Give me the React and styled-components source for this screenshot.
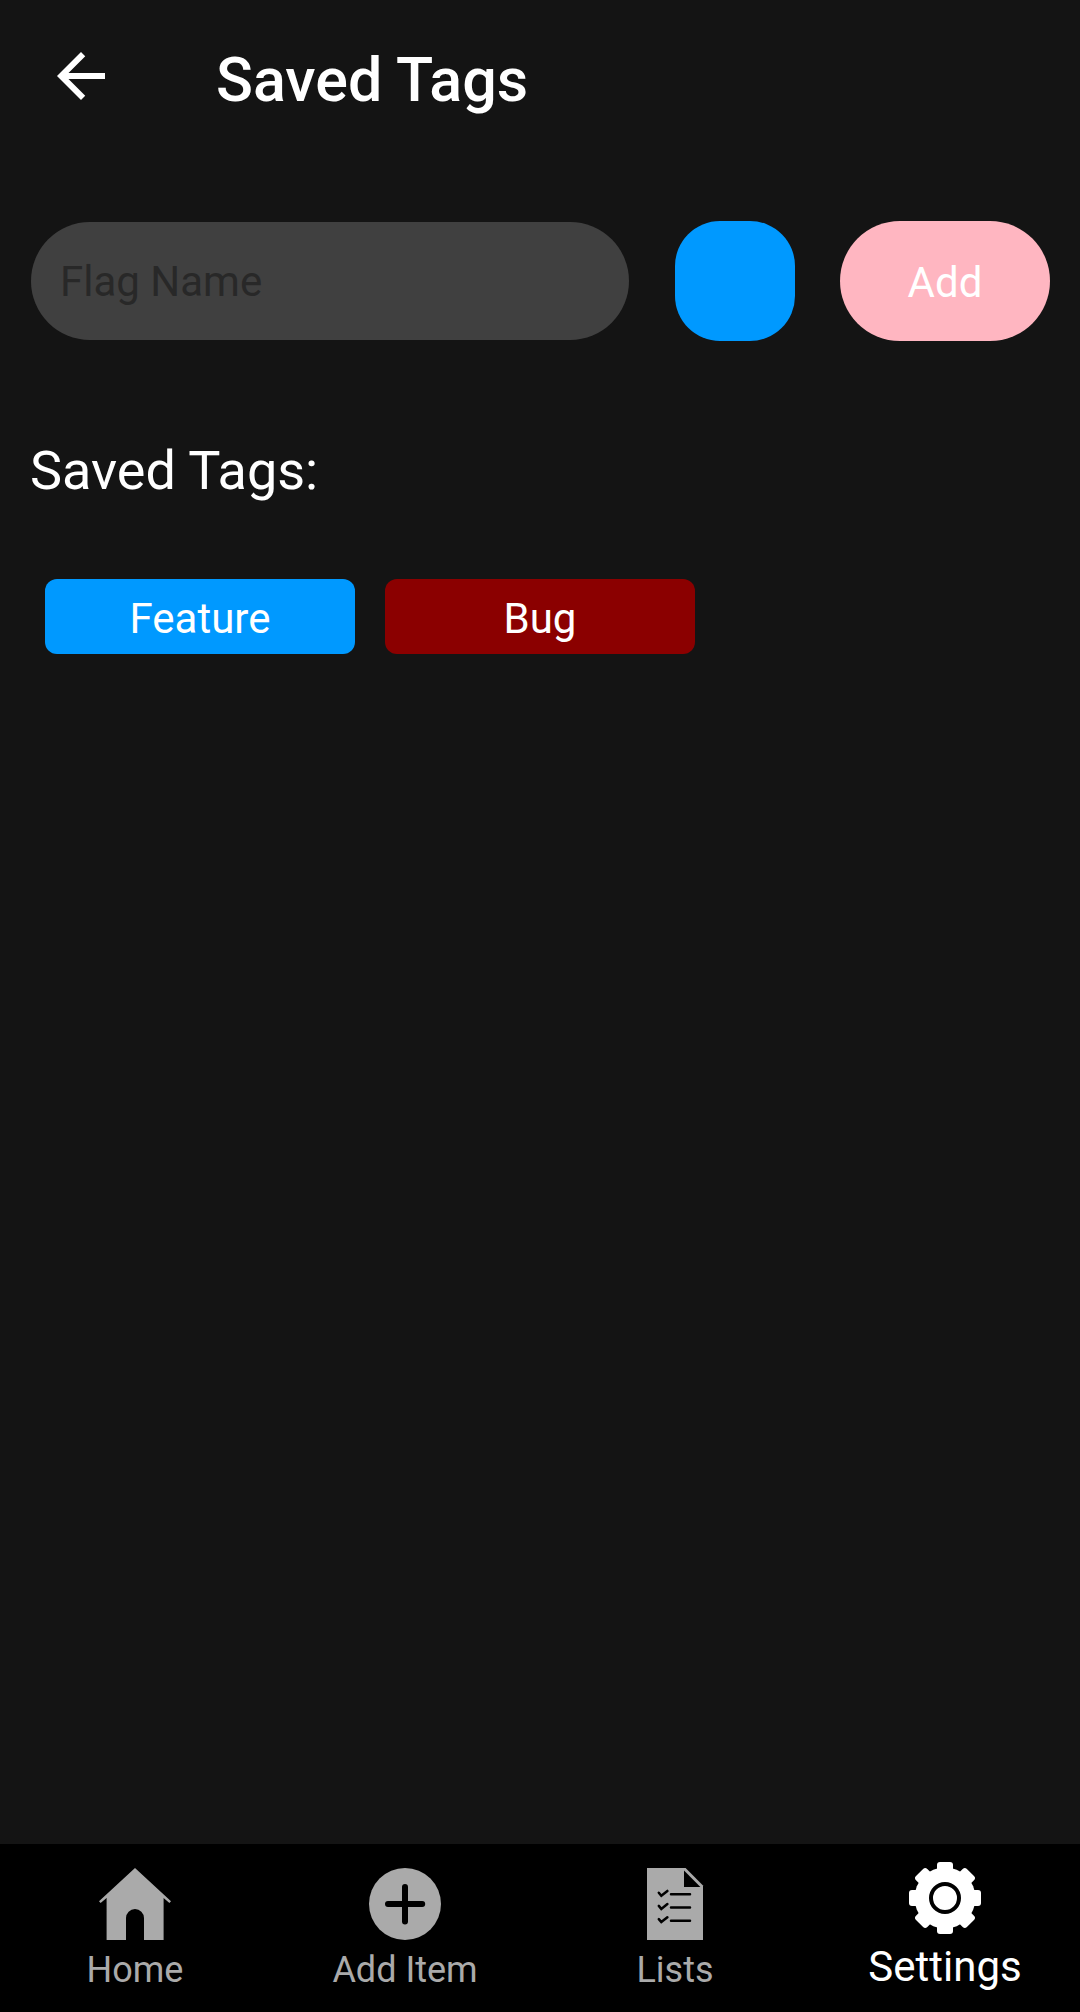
import React, { useState } from "react";
import styled, { createGlobalStyle } from "styled-components";

const GlobalStyle = createGlobalStyle`
  *, *::before, *::after { box-sizing: border-box; }
  body {
    margin: 0;
    background: #141414;
    color: #ffffff;
    font-family: Roboto, "Liberation Sans", sans-serif;
  }
  button, input { font: inherit; color: inherit; border: 0; }
`;

const Screen = styled.div`
  display: flex;
  flex-direction: column;
  min-height: 100vh;
`;

const Header = styled.header`
  display: flex;
  align-items: flex-start;
  gap: 99px;
  padding: 40px 45px 0;
`;

const BackButton = styled.button`
  display: flex;
  padding: 0;
  background: none;
  cursor: pointer;
`;

const Icon = styled.svg`
  display: block;
  width: 72px;
  height: 72px;
`;

const Title = styled.h1`
  margin: 0;
  font-size: 61px;
  font-weight: 500;
  line-height: 80px;
`;

const Main = styled.main`
  flex: 1;
  padding: 101px 30px 30px;
`;

const TagForm = styled.form`
  display: flex;
  align-items: center;
  gap: 45px;
`;

const NameInput = styled.input`
  flex: 1;
  min-width: 0;
  height: 118px;
  margin: 0 1px;
  padding: 0 29px;
  border-radius: 59px;
  background: #404040;
  font-size: 42px;
  outline: none;
  &::placeholder { color: #282828; opacity: 1; }
`;

const ColorButton = styled.button`
  width: 120px;
  height: 120px;
  border-radius: 45px;
  background: ${(p) => p.$color};
  cursor: pointer;
`;

const AddButton = styled.button`
  width: 210px;
  height: 120px;
  padding: 2px 0 0;
  border-radius: 60px;
  background: #ffb6c1;
  font-size: 42px;
  cursor: pointer;
`;

const SectionTitle = styled.h2`
  margin: 98px 0 76px;
  font-size: 54px;
  font-weight: 400;
  line-height: 64px;
`;

const TagList = styled.ul`
  display: flex;
  flex-wrap: wrap;
  gap: 30px;
  margin: 0;
  padding: 0 15px;
  list-style: none;
`;

const Tag = styled.li`
  display: flex;
  align-items: center;
  justify-content: center;
  width: 310px;
  height: 75px;
  padding-top: 4px;
  border-radius: 12px;
  background: ${(p) => p.$color};
  font-size: 42px;
`;

const TabBar = styled.nav`
  position: sticky;
  bottom: 0;
  display: grid;
  grid-template-columns: repeat(4, 1fr);
  align-items: end;
  height: 168px;
  padding-bottom: 20px;
  background: #000000;
`;

const Tab = styled.a`
  display: flex;
  flex-direction: column;
  align-items: center;
  gap: 8px;
  color: ${(p) => (p.$active ? "#ffffff" : "#aaaaaa")};
  font-size: ${(p) => (p.$active ? "42px" : "36px")};
  line-height: ${(p) => (p.$active ? "50px" : "44px")};
  text-decoration: none;
`;

const BackIcon = () => (
  <Icon viewBox="0 0 24 24" fill="currentColor" aria-hidden="true">
    <path d="M20 11H7.83l5.59-5.59L12 4l-8 8 8 8 1.41-1.41L7.83 13H20v-2z" />
  </Icon>
);

const HomeIcon = () => (
  <Icon viewBox="0 0 72 72" fill="currentColor" aria-hidden="true">
    <path d="M36 0L72 33.2L70.4 35L64.6 30V72H45V50a9 9 0 0 0-18 0V72H7.6V30L1.6 35L0 33.2Z" />
  </Icon>
);

const AddIcon = () => (
  <Icon viewBox="0 0 72 72" aria-hidden="true">
    <circle cx="36" cy="36" r="36" fill="currentColor" />
    <path d="M36 19V53.6M19 36H53.2" stroke="#000" strokeWidth="6" strokeLinecap="round" />
  </Icon>
);

const ListsIcon = () => (
  <Icon viewBox="0 0 72 72" aria-hidden="true">
    <path d="M8 0H46.6L64 17.4V72H8Z" fill="currentColor" />
    <path d="M45 2.6V19H61.4Z" fill="#000" />
    <g fill="none" stroke="#000" strokeWidth="2.5" strokeLinecap="round">
      {[26.3, 39.5, 52.7].map((y) => (
        <path key={y} d={`M32 ${y}H51M19.8 ${y - 1.6}L22.3 ${y + 1.4}L28.4 ${y - 3.4}`} />
      ))}
    </g>
  </Icon>
);

const SettingsIcon = () => (
  <Icon viewBox="0 0 72 72" fill="currentColor" aria-hidden="true">
    <circle cx="36" cy="36" r="30.5" />
    {[0, 45, 90, 135].map((angle) => (
      <rect key={angle} x="28" width="16" height="72" rx="3" transform={`rotate(${angle} 36 36)`} />
    ))}
    <circle cx="36" cy="36" r="14" fill="none" stroke="#000" strokeWidth="4" />
  </Icon>
);

const tabs = [
  { label: "Home", href: "#home", Glyph: HomeIcon },
  { label: "Add Item", href: "#add", Glyph: AddIcon },
  { label: "Lists", href: "#lists", Glyph: ListsIcon },
  { label: "Settings", href: "#settings", Glyph: SettingsIcon, active: true },
];

const colors = ["#0099ff", "#8b0000"];

export default function App() {
  const [name, setName] = useState("");
  const [color, setColor] = useState(0);
  const [tags, setTags] = useState([
    { name: "Feature", color: colors[0] },
    { name: "Bug", color: colors[1] },
  ]);

  const addTag = (event) => {
    event.preventDefault();
    if (!name.trim()) return;
    setTags([...tags, { name: name.trim(), color: colors[color] }]);
    setName("");
  };

  return (
    <Screen>
      <GlobalStyle />
      <Header>
        <BackButton type="button" aria-label="Back">
          <BackIcon />
        </BackButton>
        <Title>Saved Tags</Title>
      </Header>
      <Main>
        <TagForm onSubmit={addTag}>
          <NameInput
            type="text"
            aria-label="Flag Name"
            placeholder="Flag Name"
            value={name}
            onChange={(event) => setName(event.target.value)}
          />
          <ColorButton
            type="button"
            aria-label="Tag color"
            $color={colors[color]}
            onClick={() => setColor((color + 1) % colors.length)}
          />
          <AddButton type="submit">Add</AddButton>
        </TagForm>
        <SectionTitle>Saved Tags:</SectionTitle>
        <TagList>
          {tags.map((tag, index) => (
            <Tag key={index} $color={tag.color}>{tag.name}</Tag>
          ))}
        </TagList>
      </Main>
      <TabBar aria-label="Main">
        {tabs.map(({ label, href, Glyph, active }) => (
          <Tab key={label} href={href} $active={active} aria-current={active ? "page" : undefined}>
            <Glyph />
            {label}
          </Tab>
        ))}
      </TabBar>
    </Screen>
  );
}
